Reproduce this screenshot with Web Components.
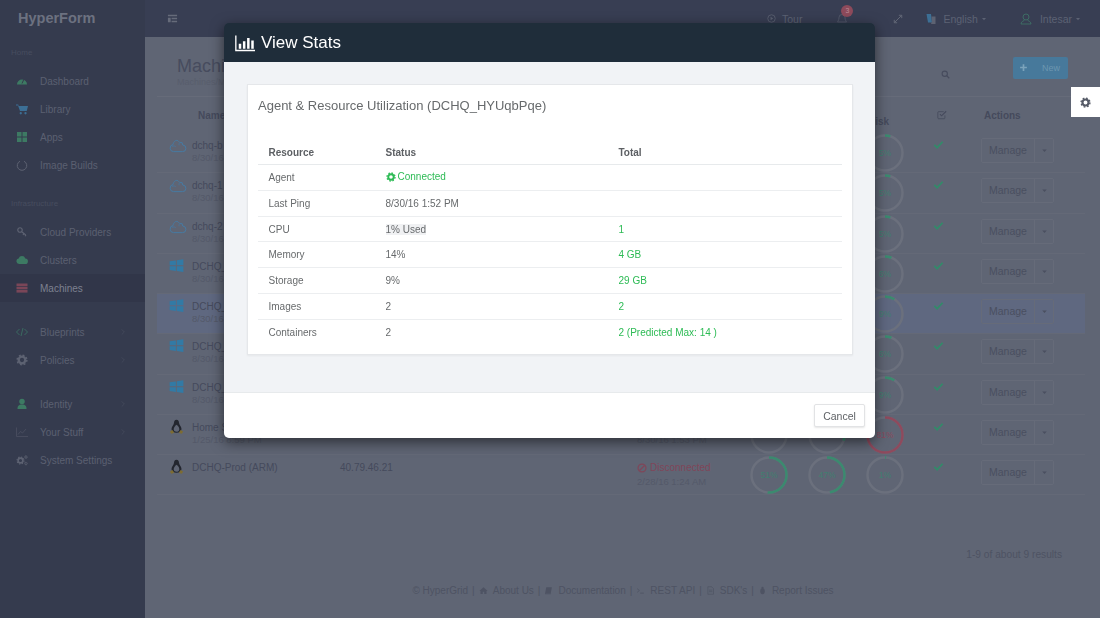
<!DOCTYPE html>
<html>
<head>
<meta charset="utf-8">
<title>HyperForm</title>
<style>
  html, body { margin: 0; height: 618px; overflow: hidden; background: #5f6574; }
  body { font-family: "Liberation Sans", Arial, sans-serif; }
  .used { background: #f0f1f3; }
  .ok { color: #2dbb55; display: inline-flex; align-items: center; gap: 2px; }
  .off { color: #7f4659; display: inline-flex; align-items: center; gap: 3px; }
</style>
</head>
<body>
<hf-app>
  <hf-sidebar slot="sidebar">
    <hf-nav-label>Home</hf-nav-label>
    <hf-nav-item icon="gauge" color="#3d7a63">Dashboard</hf-nav-item>
    <hf-nav-item icon="cart" color="#3c6f95">Library</hf-nav-item>
    <hf-nav-item icon="grid" color="#3d7a63">Apps</hf-nav-item>
    <hf-nav-item icon="spinner" color="#5d6272">Image Builds</hf-nav-item>
    <hf-nav-label gap>Infrastructure</hf-nav-label>
    <hf-nav-item icon="key" color="#5d6272">Cloud Providers</hf-nav-item>
    <hf-nav-item icon="cloud" color="#3d7a63">Clusters</hf-nav-item>
    <hf-nav-item icon="server" color="#7a4658" active>Machines</hf-nav-item>
    <hf-nav-item icon="code" color="#3a6a60" more style="margin-top:16px">Blueprints</hf-nav-item>
    <hf-nav-item icon="gear" color="#5d6272" more>Policies</hf-nav-item>
    <hf-nav-item icon="user" color="#3d7a63" more style="margin-top:16px">Identity</hf-nav-item>
    <hf-nav-item icon="chart" color="#4d5263" more>Your Stuff</hf-nav-item>
    <hf-nav-item icon="gears" color="#5d6272">System Settings</hf-nav-item>
  </hf-sidebar>
  <hf-topbar slot="topbar"></hf-topbar>
  <hf-panel slot="main">
    <hf-machine-row name="dchq-b" date="8/30/16" icon="cloudline" disk="5%"></hf-machine-row>
    <hf-machine-row name="dchq-1" date="8/30/16" icon="cloudline" disk="5%"></hf-machine-row>
    <hf-machine-row name="dchq-2" date="8/30/16" icon="cloudline" disk="5%"></hf-machine-row>
    <hf-machine-row name="DCHQ_" date="8/30/16" icon="windows" disk="6%"></hf-machine-row>
    <hf-machine-row name="DCHQ_" date="8/30/16" icon="windows" disk="9%" selected></hf-machine-row>
    <hf-machine-row name="DCHQ_" date="8/30/16" icon="windows" disk="6%"></hf-machine-row>
    <hf-machine-row name="DCHQ_" date="8/30/16" icon="windows" disk="9%"></hf-machine-row>
    <hf-machine-row name="Home S" date="1/25/16 8:59 PM" icon="tux" disk="81%" cpu="15%" mem="30%" stamp="8/30/16 1:53 PM"></hf-machine-row>
    <hf-machine-row name="DCHQ-Prod (ARM)" icon="tux" ip="40.79.46.21" cpu="51%" mem="47%" disk="1%" stamp="2/28/16 1:24 AM">
      <span class="off" slot="status"><hf-icon name="ban" size="10"></hf-icon>Disconnected</span>
    </hf-machine-row>
  </hf-panel>
</hf-app>

<hf-settings-tab></hf-settings-tab>

<hf-modal heading="View Stats">
  <hf-stats-card heading="Agent &amp; Resource Utilization (DCHQ_HYUqbPqe)">
    <hf-stat-row label="Agent"><span class="ok"><hf-icon name="gear" size="10"></hf-icon>Connected</span></hf-stat-row>
    <hf-stat-row label="Last Ping">8/30/16 1:52 PM</hf-stat-row>
    <hf-stat-row label="CPU" total="1"><span class="used">1% Used</span></hf-stat-row>
    <hf-stat-row label="Memory" total="4 GB">14%</hf-stat-row>
    <hf-stat-row label="Storage" total="29 GB">9%</hf-stat-row>
    <hf-stat-row label="Images" total="2">2</hf-stat-row>
    <hf-stat-row label="Containers" total="2 (Predicted Max: 14 )">2</hf-stat-row>
  </hf-stats-card>
</hf-modal>

<script>
const GEAR = (cx, cy, r) => `<circle cx="${cx}" cy="${cy}" r="${r * 0.6}" fill="none" stroke="currentColor" stroke-width="${r * 0.42}"/><circle cx="${cx}" cy="${cy}" r="${r * 0.88}" fill="none" stroke="currentColor" stroke-width="${r * 0.28}" stroke-dasharray="${r * 0.3455} ${r * 0.3455}"/>`;

const ICONS = {
  gauge: '<path d="M2 19a10 10 0 1 1 20 0z"/><path d="M12 17l4-9" stroke="#353b4e" stroke-width="2"/>',
  cart: '<path d="M0 3h4.5l.8 3H24l-2.5 10H8L4 5H0z"/><circle cx="9.5" cy="20.5" r="2.3"/><circle cx="19" cy="20.5" r="2.3"/>',
  grid: '<rect x="2" y="2" width="9" height="9"/><rect x="13" y="2" width="9" height="9"/><rect x="2" y="13" width="9" height="9"/><rect x="13" y="13" width="9" height="9"/>',
  spinner: '<path d="M8 4.5a9.5 9.5 0 1 0 8 0" fill="none" stroke="currentColor" stroke-width="2"/>',
  key: '<circle cx="8" cy="8" r="4.5" fill="none" stroke="currentColor" stroke-width="2.4"/><path d="M11.5 11.5l8 6.5M16 15l-2 3M20 18l-2 2.5" fill="none" stroke="currentColor" stroke-width="2.4"/>',
  cloud: '<path d="M6.5 20a5.5 5.5 0 0 1-1.2-10.9A7 7 0 0 1 18.6 9 5.5 5.5 0 0 1 18 20z"/>',
  server: '<rect x="1" y="3" width="22" height="5.2"/><rect x="1" y="9.5" width="22" height="5.2"/><rect x="1" y="16" width="22" height="5.2"/>',
  code: '<path d="M7 6l-6 6 6 6M17 6l6 6-6 6M14 4l-4 16" fill="none" stroke="currentColor" stroke-width="2"/>',
  gear: GEAR(12, 12, 11),
  gears: GEAR(9, 13, 8) + GEAR(20, 6, 3.6) + GEAR(20, 19, 3.6),
  user: '<circle cx="12" cy="7" r="5.5"/><path d="M3 22c0-6 2-9 9-9s9 3 9 9z"/>',
  useroutline: '<circle cx="12" cy="8" r="6" fill="none" stroke="currentColor" stroke-width="1.6"/><path d="M9 14c0 2-7 2-7 8h20c0-6-7-6-7-8" fill="none" stroke="currentColor" stroke-width="1.6"/>',
  chart: '<path d="M1 3v18h23" fill="none" stroke="currentColor" stroke-width="1.5"/><path d="M4 17l5-6 4 3 7-8" fill="none" stroke="currentColor" stroke-width="1.5"/>',
  chevron: '<path d="M8 4l8 8-8 8" fill="none" stroke="currentColor" stroke-width="2"/>',
  cloudline: '<path d="M6 19.5a4.8 4.8 0 0 1-.6-9.5C6 6 9 3.5 12 5l2.5 2.5h3l.8 3.2a4.4 4.4 0 0 1-.4 8.8z" fill="none" stroke="currentColor" stroke-width="1.3"/><path d="M4 12.5c2-1 3.5-.7 5 .5M14.5 7.5c-1 1-1.3 2-1 3.5" fill="none" stroke="currentColor" stroke-width="1"/>',
  windows: '<path d="M1 5.3 11 3.8v7.7H1zM12.500 3.600 23 2v9.500H12.500zM1 13h10v7.700L1 19.200zM12.500 13H23v9.500l-10.500-1.600z"/>',
  tux: '<path d="M12 1c-3 0-4 2.500-4 5 0 3-4 6-4 10 0 3 3 6 8 6s8-3 8-6c0-4-4-7-4-10 0-2.500-1-5-4-5zM12 9c2 1 4.500 4 4.500 7.500S14 20.500 12 20.500 7.500 19.500 7.500 16.500 10 10 12 9z" fill="#23262f" fill-rule="evenodd"/><path d="M1.500 20l4-2.500 3 4.500-5 1.500zM22.500 20l-4-2.500-3 4.500 5 1.500z" fill="#7d6c32"/>',
  check: '<path d="M3 13l6 6L21 6" fill="none" stroke="currentColor" stroke-width="4"/>',
  checkbox: '<path d="M19 13v6a2 2 0 0 1-2 2H4a2 2 0 0 1-2-2V6a2 2 0 0 1 2-2h12" fill="none" stroke="currentColor" stroke-width="2"/><path d="M7 10l4 4L22 3" fill="none" stroke="currentColor" stroke-width="2.6"/>',
  ban: '<circle cx="12" cy="12" r="9.500" fill="none" stroke="currentColor" stroke-width="3"/><path d="M6 18L18 6" stroke="currentColor" stroke-width="3"/>',
  search: '<circle cx="10" cy="10" r="7" fill="none" stroke="currentColor" stroke-width="3"/><path d="M15 15l7 7" stroke="currentColor" stroke-width="3.5"/>',
  plus: '<path d="M12 3v18M3 12h18" stroke="currentColor" stroke-width="4.5"/>',
  caret: '<path d="M6 9h12l-6 7z"/>',
  menu: '<path d="M2 4h20v3H2zM10 10.500h12v3H10zM10 17h12v3H10zM2 10.500h6v9.500H2z"/>',
  play: '<circle cx="12" cy="12" r="10" fill="none" stroke="currentColor" stroke-width="2.2"/><path d="M9.500 7.500l7 4.500-7 4.500z"/>',
  bell: '<path d="M12 3a6 6 0 0 0-6 6c0 6-3 8-3 9h18c0-1-3-3-3-9a6 6 0 0 0-6-6zM10 20a2 2 0 0 0 4 0" fill="none" stroke="currentColor" stroke-width="1.4"/>',
  expand: '<path d="M4 20L20 4M14 3h7v7M3 14v7h7" fill="none" stroke="currentColor" stroke-width="2.2"/>',
  flag: '<path d="M3 2h9l2 17H6z" fill="#3c6f95"/><path d="M13 7h8v15h-8l-2-3h3z" fill="#5d6272"/>',
  bars: '<path d="M1 3v18h23" fill="none" stroke="currentColor" stroke-width="1.6"/><path d="M4.500 13h3v6h-3zM9.500 10h3v9h-3zM14.500 6h3v13h-3zM19.500 9h3v10h-3z"/>',
  home: '<path d="M12 3L1 13h3v8h6v-6h4v6h6v-8h3z"/>',
  book: '<path d="M6 3h15l-3 16H3zM3 19c-1 2 0 3 2 3h13l1-2H6"/>',
  terminal: '<path d="M3 7l6 5-6 5M11 19h10" fill="none" stroke="currentColor" stroke-width="2"/>',
  file: '<path d="M5 2h10l5 5v15H5zM8 11h9M8 15h9" fill="none" stroke="currentColor" stroke-width="1.8"/>',
  bug: '<ellipse cx="12" cy="14" rx="6" ry="8"/><circle cx="12" cy="5" r="3"/>'
};

class HfIcon extends HTMLElement {
  connectedCallback() {
    const size = this.getAttribute('size') || 14;
    const color = this.getAttribute('color') || 'currentColor';
    this.attachShadow({mode: 'open'});
    this.shadowRoot.innerHTML = `
      <style>
        :host { display: inline-flex; flex: none; color: ${color}; }
        svg { display: block; fill: currentColor; }
      </style>
      <svg width="${size}" height="${size}" viewBox="0 0 24 24">${ICONS[this.getAttribute('name')] || ''}</svg>
    `;
  }
}
customElements.define('hf-icon', HfIcon);

class HfApp extends HTMLElement {
  constructor() {
    super();
    this.attachShadow({mode: 'open'});
    this.shadowRoot.innerHTML = `
      <style>
        :host { display: grid; grid-template-columns: 145px 955px; grid-template-rows: 37px 581px; height: 618px; background: #5f6574; }
        .side { grid-row: 1 / 3; }
      </style>
      <div class="side"><slot name="sidebar"></slot></div>
      <slot name="topbar"></slot>
      <slot name="main"></slot>
    `;
  }
}
customElements.define('hf-app', HfApp);

class HfSidebar extends HTMLElement {
  constructor() {
    super();
    this.attachShadow({mode: 'open'});
    this.shadowRoot.innerHTML = `
      <style>
        :host { display: block; height: 618px; background: #353b4e; }
        .logo { height: 37px; padding-left: 18px; font-size: 14.5px; font-weight: bold; line-height: 37px; color: #6c7180; }
        nav { padding-top: 9px; }
      </style>
      <div class="logo">HyperForm</div>
      <nav><slot></slot></nav>
    `;
  }
}
customElements.define('hf-sidebar', HfSidebar);

class HfNavLabel extends HTMLElement {
  constructor() {
    super();
    this.attachShadow({mode: 'open'});
    this.shadowRoot.innerHTML = `
      <style>
        :host { display: block; height: 14px; margin-bottom: 7px; padding-left: 11px; font-size: 8px; line-height: 14px; color: #474d5f; }
        :host([gap]) { margin-top: 18px; }
      </style>
      <slot></slot>
    `;
  }
}
customElements.define('hf-nav-label', HfNavLabel);

class HfNavItem extends HTMLElement {
  connectedCallback() {
    this.attachShadow({mode: 'open'});
    this.shadowRoot.innerHTML = `
      <style>
        :host { display: flex; align-items: center; height: 28px; padding-left: 16px; font-size: 10px; color: #5b6071; }
        :host([active]) { background: #313649; color: #7d8190; }
        .ic { width: 24px; display: flex; }
        .text { flex: 1; }
        .more { margin-right: 18px; color: #474d5f; }
      </style>
      <span class="ic"><hf-icon name="${this.getAttribute('icon')}" size="12" color="${this.getAttribute('color')}"></hf-icon></span>
      <span class="text"><slot></slot></span>
      ${this.hasAttribute('more') ? '<hf-icon class="more" name="chevron" size="8"></hf-icon>' : ''}
    `;
  }
}
customElements.define('hf-nav-item', HfNavItem);

class HfTopbar extends HTMLElement {
  constructor() {
    super();
    this.attachShadow({mode: 'open'});
    this.shadowRoot.innerHTML = `
      <style>
        :host { display: flex; align-items: center; height: 37px; padding-left: 22px; background: #383e53; font-size: 10.5px; color: #5c6273; }
        .menu { margin-right: 589px; }
        .item { display: flex; align-items: center; gap: 6px; }
        .bell { position: relative; margin-left: 34px; }
        .badge { position: absolute; left: 5px; top: -8px; width: 12px; height: 12px; border-radius: 50%; background: #8d4a5b; font-size: 7px; line-height: 12px; text-align: center; color: #b98a96; }
        .caret { margin-left: -4px; }
      </style>
      <hf-icon class="menu" name="menu" size="11" color="#666b7a"></hf-icon>
      <span class="item"><hf-icon name="play" size="9"></hf-icon>Tour</span>
      <span class="item bell"><hf-icon name="bell" size="12"></hf-icon><span class="badge">3</span></span>
      <hf-icon name="expand" size="10" color="#666b7a" style="margin-left:45px"></hf-icon>
      <span class="item" style="margin-left:22px"><hf-icon name="flag" size="12"></hf-icon>English<hf-icon class="caret" name="caret" size="8"></hf-icon></span>
      <span class="item" style="margin-left:32px"><hf-icon name="useroutline" size="12" color="#3f7768"></hf-icon><span style="margin-left:2px">Intesar</span><hf-icon class="caret" name="caret" size="8"></hf-icon></span>
    `;
  }
}
customElements.define('hf-topbar', HfTopbar);

const ROW_COLUMNS = '23px 148px 297px 113px 58px 58px 58px 57px 1fr';

class HfPanel extends HTMLElement {
  constructor() {
    super();
    this.attachShadow({mode: 'open'});
    this.shadowRoot.innerHTML = `
      <style>
        :host { display: block; padding: 0 15px 0 12px; color: #454a5c; }
        header { display: flex; align-items: center; height: 60px; padding-left: 20px; border-bottom: 1px solid #666b79; box-sizing: border-box; }
        h1 { margin: 0; font-size: 18px; font-weight: normal; line-height: 20px; color: #474c5e; }
        .crumb { font-size: 9px; line-height: 13px; color: #585d6c; }
        .titles { flex: 1; padding-top: 11px; }
        .search { margin: 16px 63px 0 0; color: #474c5e; }
        .new { display: flex; align-items: center; width: 55px; height: 22px; margin: 2px 17px 0 0; border-radius: 2px; background: #47799b; font-size: 9px; color: #6c96b0; }
        .new hf-icon { margin: 0 14px 0 6px; color: #7ba3bb; }
        .heads { display: grid; grid-template-columns: ${ROW_COLUMNS}; height: 36px; padding-left: 12px; font-size: 10px; font-weight: bold; }
        .heads > * { margin-top: 13px; }
        .name { grid-column: 1 / 3; padding-left: 29px; }
        .disk { grid-column: 7; margin-top: 19px; padding-left: 2px; }
        .box { grid-column: 8; padding-left: 13px; margin-top: 13px; }
        .actions { grid-column: 9; padding-left: 3px; }
        .results { margin: 53px 23px 0 0; font-size: 10.2px; line-height: 14px; text-align: right; color: #4e5363; }
        footer { display: flex; justify-content: center; align-items: center; gap: 4px; margin-top: 21px; padding-left: 4px; height: 14px; font-size: 10px; color: #4e5363; }
        footer span { display: inline-flex; align-items: center; gap: 5px; }
      </style>
      <header>
        <div class="titles"><h1>Machines</h1><div class="crumb">Machines/Manage</div></div>
        <hf-icon class="search" name="search" size="9"></hf-icon>
        <div class="new"><hf-icon name="plus" size="9"></hf-icon>New</div>
      </header>
      <div class="heads">
        <span class="name">Name</span>
        <span class="disk">Disk</span>
        <span class="box"><hf-icon name="checkbox" size="10"></hf-icon></span>
        <span class="actions">Actions</span>
      </div>
      <slot></slot>
      <div class="results">1-9 of about 9 results</div>
      <footer>
        <span>© HyperGrid</span><span>|</span>
        <span><hf-icon name="home" size="9"></hf-icon>About Us</span><span>|</span>
        <span><hf-icon name="book" size="9"></hf-icon>Documentation</span><span>|</span>
        <span><hf-icon name="terminal" size="9"></hf-icon>REST API</span><span>|</span>
        <span><hf-icon name="file" size="9"></hf-icon>SDK's</span><span>|</span>
        <span><hf-icon name="bug" size="9"></hf-icon>Report Issues</span>
      </footer>
    `;
  }
}
customElements.define('hf-panel', HfPanel);

class HfRing extends HTMLElement {
  connectedCallback() {
    const label = this.getAttribute('value') || '';
    const pct = parseInt(label, 10) || 0;
    const color = pct > 80 ? '#8e4a5d' : '#3b8a6f';
    const r = 17.5, len = 2 * Math.PI * r;
    this.attachShadow({mode: 'open'});
    this.shadowRoot.innerHTML = `
      <style>
        :host { display: block; position: relative; width: 38px; height: 38px; }
        svg { display: block; transform: rotate(-90deg); }
        span { position: absolute; inset: 0; font-size: 8.5px; line-height: 38px; text-align: center; color: ${pct > 80 ? '#8a4a5e' : '#417f70'}; }
      </style>
      <svg width="38" height="38" viewBox="0 0 38 38" fill="none" stroke-width="2.5">
        <circle cx="19" cy="19" r="${r}" stroke="#6b707d"/>
        <circle cx="19" cy="19" r="${r}" stroke="${color}" stroke-dasharray="${len * pct / 100} ${len}"/>
      </svg>
      <span>${label}</span>
    `;
  }
}
customElements.define('hf-ring', HfRing);

class HfMachineRow extends HTMLElement {
  connectedCallback() {
    const attr = n => this.getAttribute(n) || '';
    const icon = attr('icon');
    const iconSize = icon === 'tux' ? 15 : icon === 'windows' ? 15 : 18;
    const iconColor = icon === 'tux' ? '#23262f' : icon === 'windows' ? '#327aa5' : '#467aa3';
    this.attachShadow({mode: 'open'});
    this.shadowRoot.innerHTML = `
      <style>
        :host { display: grid; grid-template-columns: ${ROW_COLUMNS}; height: 40.25px; box-sizing: border-box; padding-left: 12px; border-bottom: 1px solid #646977; font-size: 10px; color: #454a5c; }
        :host([selected]) { background: #5f6880; }
        .ic { padding-top: 4px; }
        .top { padding-top: 6px; line-height: 13px; }
        .sub { font-size: 9.5px; line-height: 12px; color: #545969; }
        hf-ring { margin-top: 1px; }
        .ok { padding: 6px 0 0 9px; color: #338a6a; }
        .act { padding-top: 5px; }
        .btn { display: inline-flex; height: 23px; border: 1px solid #666b79; border-radius: 2px; font-size: 10.5px; line-height: 23px; color: #4a4f60; }
        .btn b { width: 52px; font-weight: normal; text-align: center; border-right: 1px solid #666b79; }
        .btn i { display: flex; align-items: center; justify-content: center; width: 18px; }
      </style>
      <span class="ic"><hf-icon name="${icon}" size="${iconSize}" color="${iconColor}"></hf-icon></span>
      <span class="top">${attr('name')}<div class="sub">${attr('date')}</div></span>
      <span class="top">${attr('ip')}</span>
      <span class="top"><slot name="status">&nbsp;</slot><div class="sub">${attr('stamp')}</div></span>
      <hf-ring value="${attr('cpu')}"></hf-ring>
      <hf-ring value="${attr('mem')}"></hf-ring>
      <hf-ring value="${attr('disk')}"></hf-ring>
      <span class="ok"><hf-icon name="check" size="11"></hf-icon></span>
      <span class="act"><span class="btn"><b>Manage</b><i><hf-icon name="caret" size="9"></hf-icon></i></span></span>
    `;
  }
}
customElements.define('hf-machine-row', HfMachineRow);

class HfSettingsTab extends HTMLElement {
  constructor() {
    super();
    this.attachShadow({mode: 'open'});
    this.shadowRoot.innerHTML = `
      <style>
        :host { position: fixed; left: 1071px; top: 87px; width: 29px; height: 30px; z-index: 5; display: flex; align-items: center; justify-content: center; background: #fff; color: #555a66; }
      </style>
      <hf-icon name="gear" size="11"></hf-icon>
    `;
  }
}
customElements.define('hf-settings-tab', HfSettingsTab);

class HfModal extends HTMLElement {
  connectedCallback() {
    this.attachShadow({mode: 'open'});
    this.shadowRoot.innerHTML = `
      <style>
        :host { position: fixed; left: 224px; top: 23px; width: 651px; height: 415px; z-index: 10; display: flex; flex-direction: column; border-radius: 5px; overflow: hidden; box-shadow: 0 4px 14px rgba(0,0,0,.55); color: #676a6c; }
        .head { display: flex; align-items: center; gap: 6px; height: 39px; padding-left: 11px; background: #1f2d3a; font-size: 17px; color: #fff; }
        .body { flex: 1; padding: 22px 22px 0 23px; background: #f1f3f6; }
        .foot { display: flex; justify-content: flex-end; align-items: center; height: 46px; padding-right: 10px; box-sizing: border-box; background: #fff; border-top: 1px solid #e7eaec; }
        button { width: 51px; height: 23px; padding: 0; border: 1px solid #e2e3e5; border-radius: 2px; background: #fff; box-shadow: 0 1px 2px rgba(0,0,0,.1); font: 10.5px "Liberation Sans", Arial, sans-serif; color: #5f6266; }
      </style>
      <div class="head"><hf-icon name="bars" size="20"></hf-icon>${this.getAttribute('heading')}</div>
      <div class="body"><slot></slot></div>
      <div class="foot"><button>Cancel</button></div>
    `;
  }
}
customElements.define('hf-modal', HfModal);

class HfStatsCard extends HTMLElement {
  connectedCallback() {
    const title = this.getAttribute('heading').replace('&', '&amp;');
    this.attachShadow({mode: 'open'});
    this.shadowRoot.innerHTML = `
      <style>
        :host { display: block; height: 271px; box-sizing: border-box; padding: 11px 10px 0 10px; background: #fff; border: 1px solid #e5e7ea; box-shadow: 0 1px 2px rgba(0,0,0,.05); }
        h3 { margin: 0 0 24px; font-size: 13px; font-weight: normal; line-height: 20px; color: #676a6c; }
        .cols { display: grid; grid-template-columns: 117px 233px 1fr; height: 24px; padding-left: 10.5px; border-bottom: 1px solid #e7eaec; font-size: 10px; font-weight: bold; line-height: 25px; color: #5d6064; }
      </style>
      <h3>${title}</h3>
      <div class="cols"><span>Resource</span><span>Status</span><span>Total</span></div>
      <slot></slot>
    `;
  }
}
customElements.define('hf-stats-card', HfStatsCard);

class HfStatRow extends HTMLElement {
  connectedCallback() {
    this.attachShadow({mode: 'open'});
    this.shadowRoot.innerHTML = `
      <style>
        :host { display: grid; grid-template-columns: 117px 233px 1fr; align-items: center; height: 25.83px; box-sizing: border-box; padding-left: 10.5px; border-bottom: 1px solid #eceef0; font-size: 10px; color: #676a6c; }
        :host(:last-child) { border-bottom: 0; }
        .total { color: #2dbb55; }
      </style>
      <span>${this.getAttribute('label')}</span>
      <span><slot></slot></span>
      <span class="total">${this.getAttribute('total') || ''}</span>
    `;
  }
}
customElements.define('hf-stat-row', HfStatRow);
</script>
</body>
</html>
